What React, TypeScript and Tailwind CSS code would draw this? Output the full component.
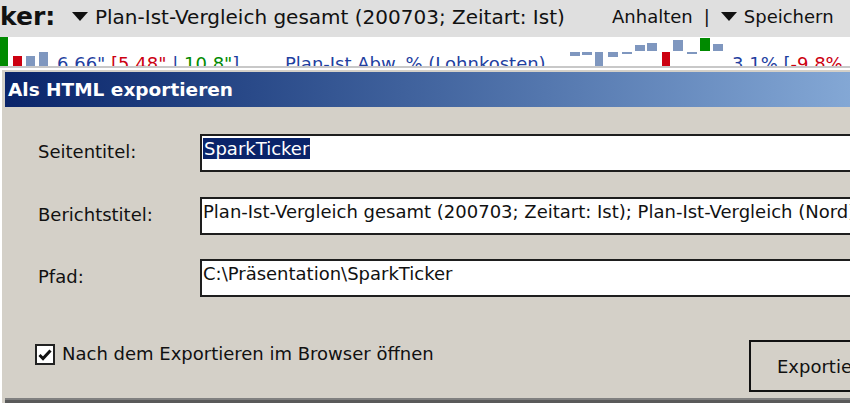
import React from 'react';

const font = "font-['DejaVu_Sans','Verdana',sans-serif]";

const Caret = () => (
  <svg width="16" height="9" viewBox="0 0 16 9" className="shrink-0">
    <polygon points="0,0 16,0 8,9" fill="#111" />
  </svg>
);

type Bar = { x: number; y: number; w: number; h: number; c: string };

const Spark = ({ bars, width }: { bars: Bar[]; width: number }) => (
  <svg width={width} height="29" viewBox={`0 0 ${width} 29`} className="shrink-0">
    {bars.map((b, i) => (
      <rect key={i} x={b.x} y={b.y} width={b.w} height={b.h} fill={b.c} />
    ))}
  </svg>
);

const BLUE = '#7f97bf';
const RED = '#cc0010';
const GREEN = '#008a00';

const leftBars: Bar[] = [
  { x: 0, y: 0, w: 8, h: 29, c: GREEN },
  { x: 13, y: 19, w: 9, h: 10, c: RED },
  { x: 26, y: 19, w: 9, h: 10, c: BLUE },
  { x: 39, y: 15, w: 9, h: 14, c: BLUE },
];

const rightBars: Bar[] = [
  { x: 0, y: 15, w: 10, h: 4, c: BLUE },
  { x: 12, y: 15, w: 10, h: 3, c: BLUE },
  { x: 25, y: 15, w: 8, h: 14, c: BLUE },
  { x: 38, y: 15, w: 10, h: 5, c: BLUE },
  { x: 52, y: 15, w: 10, h: 2, c: BLUE },
  { x: 65, y: 8, w: 10, h: 6, c: BLUE },
  { x: 77, y: 6, w: 10, h: 8, c: BLUE },
  { x: 92, y: 15, w: 8, h: 14, c: RED },
  { x: 103, y: 3, w: 10, h: 11, c: BLUE },
  { x: 117, y: 15, w: 10, h: 2, c: BLUE },
  { x: 130, y: 1, w: 10, h: 13, c: GREEN },
  { x: 143, y: 7, w: 10, h: 7, c: BLUE },
];

const Field = ({ label, children }: { label: string; children: React.ReactNode }) => (
  <div className="flex items-start">
    <div className="w-[162px] shrink-0 pt-[7px] text-[18px] leading-[22px] text-[#111]">{label}</div>
    <div className="w-[700px] shrink-0 h-[38px] bg-white border-2 border-[#1e1e1e] pt-[2px] pl-[1px] text-[18px] leading-[22px] text-[#111] whitespace-nowrap overflow-hidden">
      {children}
    </div>
  </div>
);

export default function App() {
  return (
    <div className={`w-[850px] h-[403px] overflow-hidden bg-[#d4d0c8] ${font}`}>
      {/* top toolbar */}
      <div className="h-[37px] pb-[4px] bg-[#dfdfdf] flex items-center text-[#111] whitespace-nowrap">
        <span className="text-[25px] font-bold w-[72px]">ker:</span>
        <Caret />
        <span className="ml-[7px] text-[20px] w-[517px]">Plan-Ist-Vergleich gesamt (200703; Zeitart: Ist)</span>
        <span className="text-[18px]">Anhalten</span>
        <span className="text-[18px] mx-[11px]">|</span>
        <Caret />
        <span className="ml-[7px] text-[18px]">Speichern</span>
      </div>

      {/* ticker row, covered by the dialog */}
      <div className="h-[29px] bg-white overflow-hidden flex items-start whitespace-nowrap text-[18px] leading-[18px]">
        <Spark bars={leftBars} width={57} />
        <div className="w-[228px] shrink-0 pt-[18px]">
          <span className="text-[#1f3f9f]">6,66" </span>
          <span className="text-[#cc0010]">[5,48" </span>
          <span className="text-[#1f3f9f]">| </span>
          <span className="text-[#008a00]">10,8"</span>
          <span className="text-[#1f3f9f]">]</span>
        </div>
        <div className="w-[285px] shrink-0 pt-[18px] text-[#1f3f9f]">Plan-Ist Abw. % (Lohnkosten)</div>
        <Spark bars={rightBars} width={162} />
        <div className="shrink-0 pt-[18px]">
          <span className="text-[#1f3f9f]">3,1% [</span>
          <span className="text-[#cc0010]">-9,8%</span>
        </div>
      </div>

      {/* dialog */}
      <div className="w-[1060px] border-t-2 border-[#c8c8c8] bg-[#d4d0c8]">
        <div className="border-t-2 border-l-2 border-white pt-[2px] pl-[3px]">
          <div className="h-[35px] bg-gradient-to-r from-[#0a246a] to-[#a6caf0] flex items-center pl-[3px] text-white font-bold text-[18.5px]">
            Als HTML exportieren
          </div>
          <div className="h-[291px] flex flex-col pl-[33px] pt-[27px]">
            <Field label="Seitentitel:">
              <span className="bg-[#0a246a] text-white px-[1px]">SparkTicker</span>
            </Field>
            <div className="h-[25px]" />
            <Field label="Berichtstitel:">
              Plan-Ist-Vergleich gesamt (200703; Zeitart: Ist); Plan-Ist-Vergleich (Nord)
            </Field>
            <div className="h-[24px]" />
            <Field label="Pfad:">C:\Präsentation\SparkTicker</Field>
            <div className="flex items-start mt-[43px]">
              <div className="mt-[4px] w-[20px] h-[21px] bg-white border-2 border-[#222] flex items-center justify-center shrink-0 -ml-[3px]">
                <svg width="14" height="12" viewBox="0 0 14 12">
                  <path d="M1.5 6 L5 9.5 L12.5 1.5" stroke="#111" strokeWidth="3" fill="none" />
                </svg>
              </div>
              <span className="mt-[3px] ml-[7px] text-[18px] leading-[22px] text-[#111] w-[687px]">Nach dem Exportieren im Browser öffnen</span>
              <div className="w-[130px] h-[52px] border-2 border-[#111] flex items-center pl-[26px] text-[18px] text-[#111] shrink-0">
                Exportieren
              </div>
            </div>
          </div>
          <div className="h-[5px] border-t-2 border-[#808080] bg-[#5a5a5a]" />
        </div>
      </div>
    </div>
  );
}
